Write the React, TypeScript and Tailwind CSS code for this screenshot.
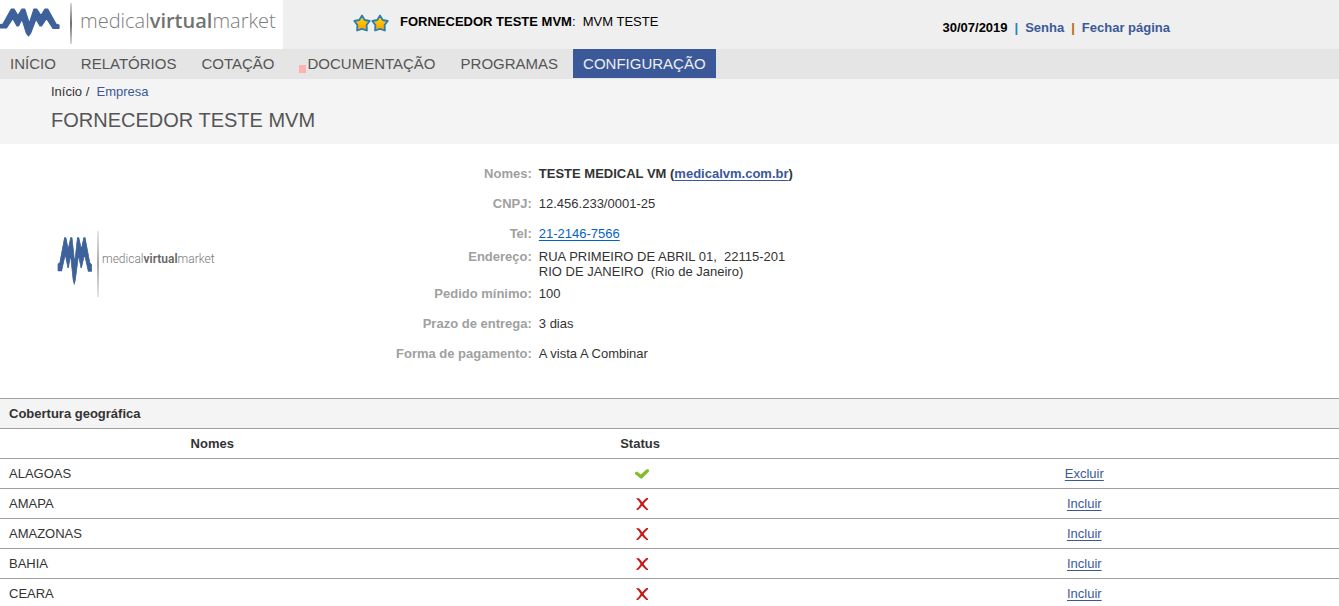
const font = "font-['Liberation_Sans',Arial,sans-serif]";

const menu = ['INÍCIO', 'RELATÓRIOS', 'COTAÇÃO', 'DOCUMENTAÇÃO', 'PROGRAMAS', 'CONFIGURAÇÃO'];

const states = [
  { name: 'ALAGOAS', covered: true },
  { name: 'AMAPA', covered: false },
  { name: 'AMAZONAS', covered: false },
  { name: 'BAHIA', covered: false },
  { name: 'CEARA', covered: false },
];

function Zigzag() {
  return (
    <path
      d="M0 24.500L3 24L11.300 9H14L17.900 15.500L22 9H24.700L29.300 23.500L34 9H36.700L41 15.500L45 9H47.700L56 24L59 25V28.300H53L46.500 18.500L41.500 26H40L36 19L30.500 33.500L28.500 36L26.500 33.500L22 19L18.500 26H17L12.800 18.500L6.500 28H0Z"
      fill="#3d619b"
      stroke="#3d619b"
      strokeWidth="1.200"
      strokeLinejoin="round"
    />
  );
}

function HeaderLogo() {
  return (
    <svg width="283" height="49" viewBox="0 0 283 49" className="block shrink-0 bg-white" role="img" aria-label="medicalvirtualmarket">
      <defs>
        <linearGradient id="bar" x1="0" y1="0" x2="0" y2="1">
          <stop offset="0" stopColor="#d8d8d8" />
          <stop offset="0.5" stopColor="#6f6f6f" />
          <stop offset="1" stopColor="#d8d8d8" />
        </linearGradient>
      </defs>
      <Zigzag />
      <rect x="70" y="3" width="2" height="41" fill="url(#bar)" />
      <text x="80" y="28" fontSize="20" fill="#7c7c7c" className="font-['Open_Sans',sans-serif] font-light">
        medical<tspan className="font-semibold" fill="#707372">virtual</tspan>market
      </text>
    </svg>
  );
}

function CompanyLogo() {
  return (
    <svg width="160" height="68" viewBox="0 0 160 68" className="block" role="img" aria-label="medicalvirtualmarket">
      <g transform="translate(2 -7) scale(.57 1.690)">
        <Zigzag />
      </g>
      <rect x="41" y="1" width="2" height="66" fill="url(#bar)" opacity=".6" />
      <text x="46" y="33" fontSize="12" fill="#777" className="font-['Roboto',sans-serif] font-light">
        medical<tspan className="font-semibold" fill="#666">virtual</tspan>market
      </text>
    </svg>
  );
}

function Star() {
  return (
    <svg width="18" height="20" viewBox="0 0 18 20" aria-hidden="true">
      <defs>
        <linearGradient id="gold" x1="0" y1="0" x2="0" y2="1">
          <stop offset="0" stopColor="#ffe000" />
          <stop offset="1" stopColor="#ff9a00" />
        </linearGradient>
      </defs>
      <path d="M9 2.500L11.700 7L16.700 8L13.600 12L13.900 17.500L9 15.800L4.100 17.500L4.400 12L1.300 8L6.300 7Z" fill="url(#gold)" stroke="#2a7fb0" strokeWidth="1.800" strokeLinejoin="round" />
    </svg>
  );
}

function Check() {
  return (
    <svg width="14" height="10" viewBox="0 0 14 10" className="mx-auto block" role="img" aria-label="Sim">
      <path d="M0 3.500L2 2.500L5.800 5.500L12 0L14 .8V2.500L7 9.500H5.500L0 5Z" fill="#83bd2d" />
    </svg>
  );
}

function Cross() {
  return (
    <svg width="12" height="12" viewBox="0 0 12 12" className="mx-auto block" role="img" aria-label="Não">
      <path d="M0 .3H3Q4.500 2 6.200 4.300Q8.500 1.300 10.500 0H12V1.300Q9.300 3.500 7.600 6Q9.500 9 12 11V12H10.500Q8 10.300 6 7.800Q4 10.500 2 12H.5V11Q3 9 4.600 6Q3 3 0 .3Z" fill="#c81818" />
    </svg>
  );
}

const link = 'text-[#3b5998] underline underline-offset-2';

export default function App() {
  const details = [
    {
      label: 'Nomes:',
      value: (
        <strong>
          TESTE MEDICAL VM (<a href="#site" className={link}>medicalvm.com.br</a>)
        </strong>
      ),
    },
    { label: 'CNPJ:', value: '12.456.233/0001-25' },
    { label: 'Tel:', value: <a href="tel:21-2146-7566" className="text-[#0563c1] underline underline-offset-2">21-2146-7566</a> },
    {
      label: 'Endereço:',
      multiline: true,
      value: (
        <>
          RUA PRIMEIRO DE ABRIL 01,&nbsp; 22115-201
          <br />
          RIO DE JANEIRO&nbsp; (Rio de Janeiro)
        </>
      ),
    },
    { label: 'Pedido mínimo:', value: '100' },
    { label: 'Prazo de entrega:', value: '3 dias' },
    { label: 'Forma de pagamento:', value: 'A vista A Combinar' },
  ];

  return (
    <div className={`${font} bg-white text-[13px] leading-[15px] text-[#333]`}>
      <header className="flex items-start bg-[#efefef] text-black">
        <HeaderLogo />
        <div className="flex flex-1 items-start justify-between pl-[70px] pr-[169px]">
          <div className="flex items-center pt-[13px]">
            <Star />
            <Star />
            <p className="pb-1 pl-[11px]">
              <strong>FORNECEDOR TESTE MVM</strong>:&nbsp; MVM TESTE
            </p>
          </div>
          <div className="flex gap-[7px] pt-5 font-bold">
            <span>30/07/2019</span>
            <span className="text-[#2484b4]">|</span>
            <a href="#senha" className="text-[#3b5998]">Senha</a>
            <span className="text-[#b86a00]">|</span>
            <a href="#fechar" className="text-[#3b5998]">Fechar página</a>
          </div>
        </div>
      </header>

      <nav className="flex gap-[5px] bg-[#e5e5e5] pb-px text-[15px] leading-[29px] text-[#555]">
        {menu.map((item) => {
          const active = item === 'CONFIGURAÇÃO';
          const flagged = item === 'DOCUMENTAÇÃO';
          return (
            <a key={item} href="#menu" className={active ? 'flex bg-[#3b5998] px-[10px] text-[#eee]' : 'flex px-[10px]'}>
              {flagged && <span className="mr-px mt-4 h-2 w-[7px] bg-[#ffb0b0]" />}
              {item}
            </a>
          );
        })}
      </nav>

      <div className="bg-[#f4f4f4] px-[51px] pb-[11px] pt-[5px]">
        <p>
          Início /&nbsp; <a href="#empresa" className="text-[#3b5998]">Empresa</a>
        </p>
        <h1 className="pt-[9px] text-[20px] leading-[25px] text-[#555]">FORNECEDOR TESTE MVM</h1>
      </div>

      <main>
        <section className="flex pb-[29px] pt-[15px]">
          <div className="flex w-1/5 items-center justify-center pl-1">
            <CompanyLogo />
          </div>
          <dl className="flex-1">
            {details.map((d) => (
              <div key={d.label} className={d.multiline ? 'flex gap-[7px]' : 'flex gap-[7px] leading-[30px]'}>
                <dt className="w-[264px] text-right font-bold text-[#a0a0a0]">{d.label}</dt>
                <dd>{d.value}</dd>
              </div>
            ))}
          </dl>
        </section>

        <table className="w-full table-fixed border-collapse leading-[29px]">
          <colgroup>
            <col className="w-[31.7%]" />
            <col className="w-[32.2%]" />
            <col />
          </colgroup>
          <thead>
            <tr className="border-y border-[#a0a0a0] bg-[#f4f4f4]">
              <th colSpan={3} className="px-[9px] text-left">Cobertura geográfica</th>
            </tr>
            <tr className="border-b border-[#a0a0a0]">
              <th>Nomes</th>
              <th>Status</th>
              <th />
            </tr>
          </thead>
          <tbody>
            {states.map((s) => (
              <tr key={s.name} className="border-b border-[#a0a0a0]">
                <td className="px-[9px]">{s.name}</td>
                <td className="pl-1">{s.covered ? <Check /> : <Cross />}</td>
                <td className="pr-[26px] text-center">
                  <a href="#cobertura" className={link}>{s.covered ? 'Excluir' : 'Incluir'}</a>
                </td>
              </tr>
            ))}
          </tbody>
        </table>
      </main>
    </div>
  );
}
